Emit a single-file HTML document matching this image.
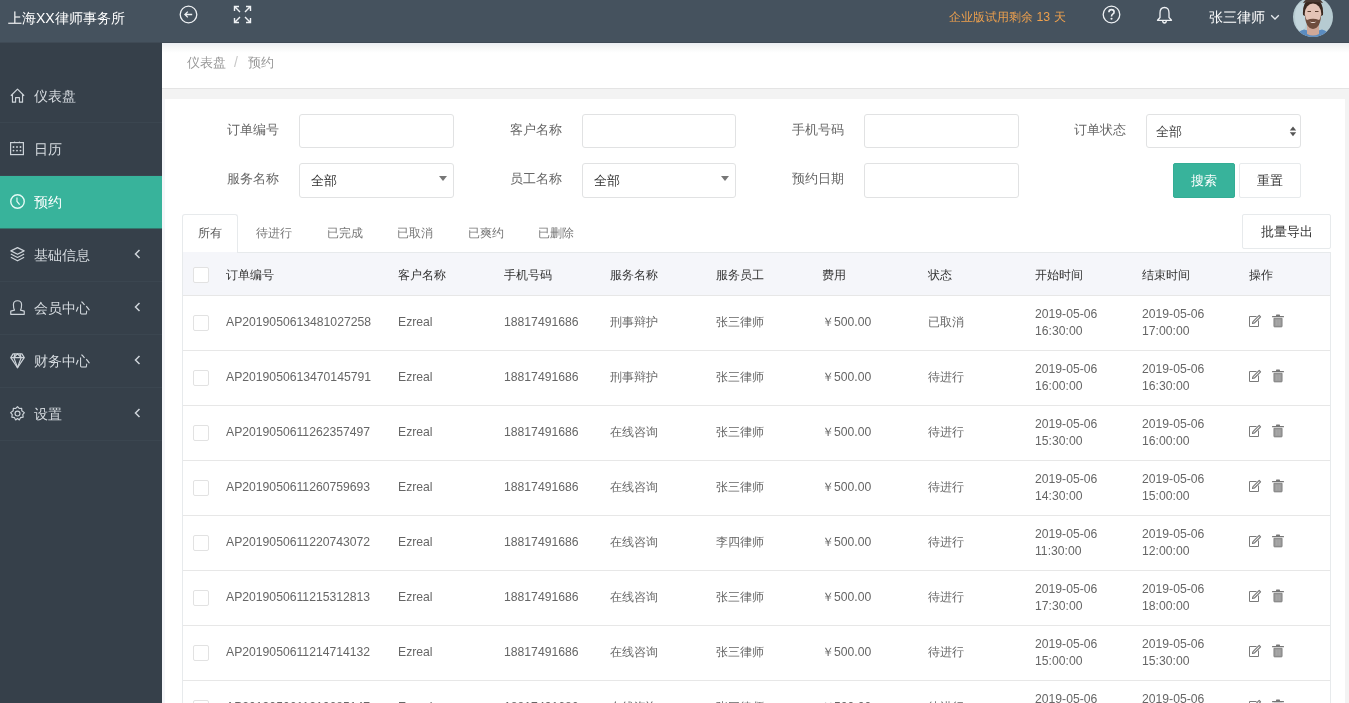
<!DOCTYPE html>
<html><head><meta charset="utf-8">
<style>
*{margin:0;padding:0;box-sizing:border-box}
html,body{width:1349px;height:703px;overflow:hidden;background:#f3f3f3;font-family:"Liberation Sans",sans-serif;font-size:13px;color:#676a6c}
.abs{position:absolute;white-space:nowrap}
svg{position:absolute;overflow:visible}
#hdr{position:absolute;left:0;top:0;width:1349px;height:43px;background:#45525e;border-bottom:1px solid #3f4a55}
#side{position:absolute;left:0;top:43px;width:162px;height:660px;background:#36404a}
.mi{position:absolute;left:0;width:162px;height:53px;border-bottom:1px solid #3b4650;color:#d5dadf;font-size:14px}
.mi.act{background:#38b39b;color:#fff;border-bottom:1px solid #33776d}
.mi .t{position:absolute;left:34px;top:16px;line-height:20px;white-space:nowrap}
#crumb{position:absolute;left:162px;top:43px;width:1187px;height:46px;background:#fff;border-bottom:1px solid #e4e4e4}
#panel{position:absolute;left:165px;top:99px;width:1180px;height:604px;background:#fff}
#gut{position:absolute;left:162px;top:99px;width:3px;height:604px;background:#f5f6f9}
.lbl{position:absolute;font-size:13px;color:#666;line-height:16px;white-space:nowrap}
.inp{position:absolute;width:155px;height:34px;border:1px solid #e1e2e3;border-radius:3px;background:#fff}
.inp .v{position:absolute;left:11px;top:8px;color:#333;font-size:13px;line-height:16px}
.tri{position:absolute;right:6px;top:12px;width:0;height:0;border-left:4px solid transparent;border-right:4px solid transparent;border-top:5px solid #777}
.btn{position:absolute;height:35px;border-radius:2px;font-size:13px;text-align:center;line-height:33px;white-space:nowrap}
.tab{position:absolute;top:225px;font-size:12px;color:#777;line-height:16px;white-space:nowrap}
#tbl{position:absolute;left:182px;top:252px;width:1149px;height:470px;border:1px solid #e7eaec;background:#fff}
#thd{position:absolute;left:183px;top:253px;width:1147px;height:43px;background:#f5f6fa}
.th{position:absolute;top:267px;font-size:12px;color:#333;font-weight:500;line-height:16px;white-space:nowrap}
.rl{position:absolute;left:183px;width:1147px;height:1px;background:#e7e7e7}
.c{position:absolute;font-size:12.2px;color:#666;line-height:16px;white-space:nowrap}
.c2{position:absolute;font-size:12.2px;color:#666;line-height:17px;white-space:nowrap}
.cb{position:absolute;width:16px;height:16px;border:1px solid #e2e2e2;border-radius:2px;background:#fff}
</style></head><body style="will-change:transform">
<div id="hdr">
  <div class="abs" style="left:8px;top:9px;font-size:14px;color:#fff;line-height:18px">上海XX律师事务所</div>
  <!-- back circle -->
  <svg style="left:179px;top:5px" width="19" height="19" viewBox="0 0 19 19"><circle cx="9.5" cy="9.5" r="8.3" fill="none" stroke="#eef1f4" stroke-width="1.3"/><path d="M13.2 9.5H6M8.8 6.6L5.9 9.5L8.8 12.4" fill="none" stroke="#eef1f4" stroke-width="1.3"/></svg>
  <!-- expand -->
  <svg style="left:233px;top:5px" width="19" height="19" viewBox="0 0 19 19"><g fill="none" stroke="#eef1f4" stroke-width="1.4"><path d="M1.5 6V1.5H6M1.8 1.8L7 7"/><path d="M13 1.5H17.5V6M17.2 1.8L12 7"/><path d="M1.5 13V17.5H6M1.8 17.2L7 12"/><path d="M13 17.5H17.5V13M17.2 17.2L12 12"/></g></svg>
  <div class="abs" style="left:949px;top:9px;font-size:12.3px;color:#eea04d;line-height:16px">企业版试用剩余 13 天</div>
  <!-- help -->
  <svg style="left:1102px;top:5px" width="19" height="19" viewBox="0 0 19 19"><circle cx="9.5" cy="9.5" r="8.3" fill="none" stroke="#eef1f4" stroke-width="1.3"/><path d="M6.9 7.2Q6.9 4.6 9.5 4.6Q12.1 4.6 12.1 7Q12.1 8.4 10.7 9.1Q9.5 9.8 9.5 11.4" fill="none" stroke="#eef1f4" stroke-width="1.6"/><circle cx="9.5" cy="13.8" r="1.05" fill="#eef1f4"/></svg>
  <!-- bell -->
  <svg style="left:1156px;top:6px" width="17" height="19" viewBox="0 0 17 19"><path d="M8.5 1.5Q4 1.5 4 7V11.5L1.5 14.3H15.5L13 11.5V7Q13 1.5 8.5 1.5Z" fill="none" stroke="#eef1f4" stroke-width="1.3" stroke-linejoin="round"/><path d="M6.6 14.6Q6.8 17 8.5 17Q10.2 17 10.4 14.6" fill="none" stroke="#eef1f4" stroke-width="1.3"/></svg>
  <div class="abs" style="left:1209px;top:8px;font-size:14px;color:#fff;line-height:18px">张三律师</div>
  <svg style="left:1270px;top:14px" width="10" height="7" viewBox="0 0 10 7"><path d="M1.2 1.3L5 5L8.8 1.3" fill="none" stroke="#e6eaee" stroke-width="1.3"/></svg>
  <!-- avatar -->
  <svg style="left:1293px;top:-3px" width="40" height="40" viewBox="0 0 40 40">
    <defs><clipPath id="av"><circle cx="20" cy="20" r="20"/></clipPath></defs>
    <g clip-path="url(#av)">
      <rect width="40" height="40" fill="#b6cbd1"/>
      <ellipse cx="8" cy="20" rx="6" ry="14" fill="#c3d6dc"/>
      <path d="M2 42Q4 34 11 32.5L20 35L29 32.5Q36 34 38 42Z" fill="#5b8cc0"/>
      <path d="M14 28H26V37Q20 40 14 37Z" fill="#cfa898"/>
      <path d="M10 18Q9 2 20 2Q31 2 30 18L28 19Q27 9 20 9Q13 9 12 19Z" fill="#3a2920"/>
      <ellipse cx="20" cy="17" rx="8.3" ry="10.5" fill="#e4c4b6"/>
      <path d="M11.8 16Q12 31 20 32Q28 31 28.2 16Q27.5 22 26 23Q20 20.5 14 23Q12.5 22 11.8 16Z" fill="#6e4d3d"/>
      <path d="M16.5 24.5Q20 27.5 23.5 24.5Q20 25.5 16.5 24.5Z" fill="#f2e4de"/>
      <path d="M10 6Q14 0 20 0Q26 0 30 6Q26 5 20 5Q14 5 10 6Z" fill="#4a3a32"/><path d="M14.5 14.5H18M22 14.5H25.5" stroke="#5a3e30" stroke-width="1.2"/>
    </g>
  </svg>
</div>
<div id="side">
  <div class="mi" style="top:27px"><svg style="left:10px;top:18px" width="15" height="15" viewBox="0 0 14 14"><path d="M0.8 7.2L7 1L13.2 7.2M2.3 5.8V13.2H5.2V9H8.8V13.2H11.7V5.8" fill="none" stroke="#cdd3d9" stroke-width="1.1" stroke-linejoin="round"/></svg><span class="t">仪表盘</span></div>
  <div class="mi" style="top:80px"><svg style="left:10px;top:18px" width="15" height="15" viewBox="0 0 15 15"><rect x="0.6" y="1.6" width="12.8" height="12" fill="none" stroke="#cdd3d9" stroke-width="1.2"/><g fill="#cdd3d9"><circle cx="4.6" cy="1.2" r="0.8"/><circle cx="9.4" cy="1.2" r="0.8"/><circle cx="3.5" cy="6" r="0.95"/><circle cx="7" cy="6" r="0.95"/><circle cx="10.5" cy="6" r="0.95"/><circle cx="3.5" cy="9.6" r="0.95"/><circle cx="7" cy="9.6" r="0.95"/><circle cx="10.5" cy="9.6" r="0.95"/></g></svg><span class="t">日历</span></div>
  <div class="mi act" style="top:133px"><svg style="left:10px;top:18px" width="15" height="15" viewBox="0 0 14 14"><circle cx="7" cy="7" r="6.3" fill="none" stroke="#e6fbf6" stroke-width="1.3"/><path d="M6.5 3.3V7L9 10" fill="none" stroke="#e6fbf6" stroke-width="1.1"/></svg><span class="t">预约</span></div>
  <div class="mi" style="top:186px"><svg style="left:10px;top:18px" width="15" height="15" viewBox="0 0 14 14"><g fill="none" stroke="#cdd3d9" stroke-width="1.1" stroke-linejoin="round"><path d="M0.8 3.6L7 0.6L13.2 3.6L7 6.8Z"/><path d="M0.8 6.6L7 9.8L13.2 6.6"/><path d="M0.8 9.6L7 12.9L13.2 9.6"/></g></svg><span class="t">基础信息</span><svg style="left:134px;top:20px" width="7" height="10" viewBox="0 0 7 10"><path d="M5.5 1L1.5 5L5.5 9" fill="none" stroke="#cfd5db" stroke-width="1.5"/></svg></div>
  <div class="mi" style="top:239px"><svg style="left:10px;top:18px" width="15" height="15" viewBox="0 0 14 14"><path d="M4.2 9.5Q3.2 8 3.2 4.4Q3.2 0.7 7 0.7Q10.8 0.7 10.8 4.4Q10.8 8 9.8 9.5L13.3 10.4V13.4H0.7V10.4Z" fill="none" stroke="#cdd3d9" stroke-width="1.1" stroke-linejoin="round"/></svg><span class="t">会员中心</span><svg style="left:134px;top:20px" width="7" height="10" viewBox="0 0 7 10"><path d="M5.5 1L1.5 5L5.5 9" fill="none" stroke="#cfd5db" stroke-width="1.5"/></svg></div>
  <div class="mi" style="top:292px"><svg style="left:10px;top:18px" width="15" height="16" viewBox="0 0 14 15"><g fill="none" stroke="#cdd3d9" stroke-width="1.1" stroke-linejoin="round"><path d="M2.8 0.8H11.2L13.3 4.3L7 13.8L0.7 4.3Z"/><path d="M0.7 4.3H13.3M4.6 0.8L3.6 4.3L7 13.8L10.4 4.3L9.4 0.8M3.6 4.3L7 0.8L10.4 4.3"/></g></svg><span class="t">财务中心</span><svg style="left:134px;top:20px" width="7" height="10" viewBox="0 0 7 10"><path d="M5.5 1L1.5 5L5.5 9" fill="none" stroke="#cfd5db" stroke-width="1.5"/></svg></div>
  <div class="mi" style="top:345px"><svg style="left:10px;top:18px" width="15" height="15" viewBox="0 0 14 14"><g fill="none" stroke="#cdd3d9" stroke-width="1.1" stroke-linejoin="round"><path d="M7 0.6L8.6 2.3L10.9 2.2L11 4.5L13.4 6.2L11.9 8L12.3 10.4L9.9 10.8L8.7 13L7 11.7L5.3 13L4.1 10.8L1.7 10.4L2.1 8L0.6 6.2L3 4.5L3.1 2.2L5.4 2.3Z"/><circle cx="7" cy="7" r="2.3"/></g></svg><span class="t">设置</span><svg style="left:134px;top:20px" width="7" height="10" viewBox="0 0 7 10"><path d="M5.5 1L1.5 5L5.5 9" fill="none" stroke="#cfd5db" stroke-width="1.5"/></svg></div>
</div>
<div id="crumb"><div class="abs" style="left:0;top:0;width:1187px;height:10px;background:linear-gradient(#ebeef2,#f6f7f7 45%,#fff)"></div>
  <div class="abs" style="left:25px;top:11px;font-size:13px;color:#999;line-height:18px">仪表盘</div>
  <div class="abs" style="left:72px;top:10px;font-size:14px;color:#c8c8c8;line-height:18px">/</div>
  <div class="abs" style="left:86px;top:11px;font-size:13px;color:#999;line-height:18px">预约</div>
</div>
<div id="panel"></div><div id="gut"></div>

<!-- filter form -->
<div class="lbl" style="left:227px;top:122px">订单编号</div>
<div class="inp" style="left:299px;top:114px"></div>
<div class="lbl" style="left:510px;top:122px">客户名称</div>
<div class="inp" style="left:582px;top:114px;width:154px"></div>
<div class="lbl" style="left:792px;top:122px">手机号码</div>
<div class="inp" style="left:864px;top:114px"></div>
<div class="lbl" style="left:1074px;top:122px">订单状态</div>
<div class="inp" style="left:1146px;top:114px;width:155px"><span class="v" style="left:9px;top:9px;color:#444">全部</span>
  <svg style="left:142px;top:11px" width="8" height="11" viewBox="0 0 8 11"><path d="M0.8 4.6L4 0.6L7.2 4.6Z M0.8 6.2L4 10.2L7.2 6.2Z" fill="#555"/></svg></div>

<div class="lbl" style="left:227px;top:171px">服务名称</div>
<div class="inp" style="left:299px;top:163px;height:35px"><span class="v" style="top:9px">全部</span><div class="tri"></div></div>
<div class="lbl" style="left:510px;top:171px">员工名称</div>
<div class="inp" style="left:582px;top:163px;height:35px;width:154px"><span class="v" style="top:9px">全部</span><div class="tri"></div></div>
<div class="lbl" style="left:792px;top:171px">预约日期</div>
<div class="inp" style="left:864px;top:163px;height:35px"></div>
<div class="btn" style="left:1173px;top:163px;width:62px;background:#38b39b;border:1px solid #34ad95;color:#fff">搜索</div>
<div class="btn" style="left:1239px;top:163px;width:62px;background:#fff;border:1px solid #e7eaec;color:#333">重置</div>

<!-- tabs -->
<div class="abs" style="left:182px;top:214px;width:56px;height:40px;background:#fff;border:1px solid #e7eaec;border-bottom:none;border-radius:3px 3px 0 0"></div>
<div class="tab" style="left:198px;color:#555">所有</div>
<div class="tab" style="left:256px">待进行</div>
<div class="tab" style="left:327px">已完成</div>
<div class="tab" style="left:397px">已取消</div>
<div class="tab" style="left:468px">已爽约</div>
<div class="tab" style="left:538px">已删除</div>
<div class="btn" style="left:1242px;top:214px;width:89px;height:35px;background:#fff;border:1px solid #e7eaec;color:#333">批量导出</div>

<!-- table -->
<div id="tbl"></div>
<div id="thd"></div>
<div class="abs" style="left:183px;top:252px;width:54px;height:1px;background:#f5f6fa"></div>
<div class="cb" style="left:193px;top:267px"></div>
<div class="th" style="left:226px">订单编号</div>
<div class="th" style="left:398px">客户名称</div>
<div class="th" style="left:504px">手机号码</div>
<div class="th" style="left:610px">服务名称</div>
<div class="th" style="left:716px">服务员工</div>
<div class="th" style="left:822px">费用</div>
<div class="th" style="left:928px">状态</div>
<div class="th" style="left:1035px">开始时间</div>
<div class="th" style="left:1142px">结束时间</div>
<div class="th" style="left:1249px">操作</div>
<div class="rl" style="top:295px"></div>
<div class="cb" style="left:193px;top:315px"></div>
<div class="c" style="left:226px;top:314px">AP2019050613481027258</div>
<div class="c" style="left:398px;top:314px">Ezreal</div>
<div class="c" style="left:504px;top:314px">18817491686</div>
<div class="c" style="left:610px;top:314px">刑事辩护</div>
<div class="c" style="left:716px;top:314px">张三律师</div>
<div class="c" style="left:822px;top:314px">￥500.00</div>
<div class="c" style="left:928px;top:314px">已取消</div>
<div class="c2" style="left:1035px;top:306px">2019-05-06<br>16:30:00</div>
<div class="c2" style="left:1142px;top:306px">2019-05-06<br>17:00:00</div>
<svg class="ic" style="left:1248px;top:314px" width="14" height="14" viewBox="0 0 14 14"><path d="M8.5 2.5H1.5V12.5H10.5V6.5" fill="none" stroke="#7a7a7a" stroke-width="1"/><path d="M4.5 9.5L5 7.6L11.2 1.4L12.6 2.8L6.4 9Z" fill="none" stroke="#777" stroke-width="1.1" stroke-linejoin="round"/></svg>
<svg class="ic" style="left:1271px;top:314px" width="14" height="14" viewBox="0 0 14 14"><rect x="5" y="0.6" width="4" height="1.4" rx="0.6" fill="#777"/><rect x="1" y="2" width="12" height="1.3" rx="0.5" fill="#777"/><path d="M2.9 4.3H11.1V12.3Q11.1 12.9 10.4 12.9H3.6Q2.9 12.9 2.9 12.3Z" fill="#9a9a9a" stroke="#7c7c7c" stroke-width="0.8"/><path d="M5.2 5.6V11.6M7 5.6V11.6M8.8 5.6V11.6" stroke="#b4b4b4" stroke-width="0.7"/></svg>
<div class="rl" style="top:350px"></div>
<div class="cb" style="left:193px;top:370px"></div>
<div class="c" style="left:226px;top:369px">AP2019050613470145791</div>
<div class="c" style="left:398px;top:369px">Ezreal</div>
<div class="c" style="left:504px;top:369px">18817491686</div>
<div class="c" style="left:610px;top:369px">刑事辩护</div>
<div class="c" style="left:716px;top:369px">张三律师</div>
<div class="c" style="left:822px;top:369px">￥500.00</div>
<div class="c" style="left:928px;top:369px">待进行</div>
<div class="c2" style="left:1035px;top:361px">2019-05-06<br>16:00:00</div>
<div class="c2" style="left:1142px;top:361px">2019-05-06<br>16:30:00</div>
<svg class="ic" style="left:1248px;top:369px" width="14" height="14" viewBox="0 0 14 14"><path d="M8.5 2.5H1.5V12.5H10.5V6.5" fill="none" stroke="#7a7a7a" stroke-width="1"/><path d="M4.5 9.5L5 7.6L11.2 1.4L12.6 2.8L6.4 9Z" fill="none" stroke="#777" stroke-width="1.1" stroke-linejoin="round"/></svg>
<svg class="ic" style="left:1271px;top:369px" width="14" height="14" viewBox="0 0 14 14"><rect x="5" y="0.6" width="4" height="1.4" rx="0.6" fill="#777"/><rect x="1" y="2" width="12" height="1.3" rx="0.5" fill="#777"/><path d="M2.9 4.3H11.1V12.3Q11.1 12.9 10.4 12.9H3.6Q2.9 12.9 2.9 12.3Z" fill="#9a9a9a" stroke="#7c7c7c" stroke-width="0.8"/><path d="M5.2 5.6V11.6M7 5.6V11.6M8.8 5.6V11.6" stroke="#b4b4b4" stroke-width="0.7"/></svg>
<div class="rl" style="top:405px"></div>
<div class="cb" style="left:193px;top:425px"></div>
<div class="c" style="left:226px;top:424px">AP2019050611262357497</div>
<div class="c" style="left:398px;top:424px">Ezreal</div>
<div class="c" style="left:504px;top:424px">18817491686</div>
<div class="c" style="left:610px;top:424px">在线咨询</div>
<div class="c" style="left:716px;top:424px">张三律师</div>
<div class="c" style="left:822px;top:424px">￥500.00</div>
<div class="c" style="left:928px;top:424px">待进行</div>
<div class="c2" style="left:1035px;top:416px">2019-05-06<br>15:30:00</div>
<div class="c2" style="left:1142px;top:416px">2019-05-06<br>16:00:00</div>
<svg class="ic" style="left:1248px;top:424px" width="14" height="14" viewBox="0 0 14 14"><path d="M8.5 2.5H1.5V12.5H10.5V6.5" fill="none" stroke="#7a7a7a" stroke-width="1"/><path d="M4.5 9.5L5 7.6L11.2 1.4L12.6 2.8L6.4 9Z" fill="none" stroke="#777" stroke-width="1.1" stroke-linejoin="round"/></svg>
<svg class="ic" style="left:1271px;top:424px" width="14" height="14" viewBox="0 0 14 14"><rect x="5" y="0.6" width="4" height="1.4" rx="0.6" fill="#777"/><rect x="1" y="2" width="12" height="1.3" rx="0.5" fill="#777"/><path d="M2.9 4.3H11.1V12.3Q11.1 12.9 10.4 12.9H3.6Q2.9 12.9 2.9 12.3Z" fill="#9a9a9a" stroke="#7c7c7c" stroke-width="0.8"/><path d="M5.2 5.6V11.6M7 5.6V11.6M8.8 5.6V11.6" stroke="#b4b4b4" stroke-width="0.7"/></svg>
<div class="rl" style="top:460px"></div>
<div class="cb" style="left:193px;top:480px"></div>
<div class="c" style="left:226px;top:479px">AP2019050611260759693</div>
<div class="c" style="left:398px;top:479px">Ezreal</div>
<div class="c" style="left:504px;top:479px">18817491686</div>
<div class="c" style="left:610px;top:479px">在线咨询</div>
<div class="c" style="left:716px;top:479px">张三律师</div>
<div class="c" style="left:822px;top:479px">￥500.00</div>
<div class="c" style="left:928px;top:479px">待进行</div>
<div class="c2" style="left:1035px;top:471px">2019-05-06<br>14:30:00</div>
<div class="c2" style="left:1142px;top:471px">2019-05-06<br>15:00:00</div>
<svg class="ic" style="left:1248px;top:479px" width="14" height="14" viewBox="0 0 14 14"><path d="M8.5 2.5H1.5V12.5H10.5V6.5" fill="none" stroke="#7a7a7a" stroke-width="1"/><path d="M4.5 9.5L5 7.6L11.2 1.4L12.6 2.8L6.4 9Z" fill="none" stroke="#777" stroke-width="1.1" stroke-linejoin="round"/></svg>
<svg class="ic" style="left:1271px;top:479px" width="14" height="14" viewBox="0 0 14 14"><rect x="5" y="0.6" width="4" height="1.4" rx="0.6" fill="#777"/><rect x="1" y="2" width="12" height="1.3" rx="0.5" fill="#777"/><path d="M2.9 4.3H11.1V12.3Q11.1 12.9 10.4 12.9H3.6Q2.9 12.9 2.9 12.3Z" fill="#9a9a9a" stroke="#7c7c7c" stroke-width="0.8"/><path d="M5.2 5.6V11.6M7 5.6V11.6M8.8 5.6V11.6" stroke="#b4b4b4" stroke-width="0.7"/></svg>
<div class="rl" style="top:515px"></div>
<div class="cb" style="left:193px;top:535px"></div>
<div class="c" style="left:226px;top:534px">AP2019050611220743072</div>
<div class="c" style="left:398px;top:534px">Ezreal</div>
<div class="c" style="left:504px;top:534px">18817491686</div>
<div class="c" style="left:610px;top:534px">在线咨询</div>
<div class="c" style="left:716px;top:534px">李四律师</div>
<div class="c" style="left:822px;top:534px">￥500.00</div>
<div class="c" style="left:928px;top:534px">待进行</div>
<div class="c2" style="left:1035px;top:526px">2019-05-06<br>11:30:00</div>
<div class="c2" style="left:1142px;top:526px">2019-05-06<br>12:00:00</div>
<svg class="ic" style="left:1248px;top:534px" width="14" height="14" viewBox="0 0 14 14"><path d="M8.5 2.5H1.5V12.5H10.5V6.5" fill="none" stroke="#7a7a7a" stroke-width="1"/><path d="M4.5 9.5L5 7.6L11.2 1.4L12.6 2.8L6.4 9Z" fill="none" stroke="#777" stroke-width="1.1" stroke-linejoin="round"/></svg>
<svg class="ic" style="left:1271px;top:534px" width="14" height="14" viewBox="0 0 14 14"><rect x="5" y="0.6" width="4" height="1.4" rx="0.6" fill="#777"/><rect x="1" y="2" width="12" height="1.3" rx="0.5" fill="#777"/><path d="M2.9 4.3H11.1V12.3Q11.1 12.9 10.4 12.9H3.6Q2.9 12.9 2.9 12.3Z" fill="#9a9a9a" stroke="#7c7c7c" stroke-width="0.8"/><path d="M5.2 5.6V11.6M7 5.6V11.6M8.8 5.6V11.6" stroke="#b4b4b4" stroke-width="0.7"/></svg>
<div class="rl" style="top:570px"></div>
<div class="cb" style="left:193px;top:590px"></div>
<div class="c" style="left:226px;top:589px">AP2019050611215312813</div>
<div class="c" style="left:398px;top:589px">Ezreal</div>
<div class="c" style="left:504px;top:589px">18817491686</div>
<div class="c" style="left:610px;top:589px">在线咨询</div>
<div class="c" style="left:716px;top:589px">张三律师</div>
<div class="c" style="left:822px;top:589px">￥500.00</div>
<div class="c" style="left:928px;top:589px">待进行</div>
<div class="c2" style="left:1035px;top:581px">2019-05-06<br>17:30:00</div>
<div class="c2" style="left:1142px;top:581px">2019-05-06<br>18:00:00</div>
<svg class="ic" style="left:1248px;top:589px" width="14" height="14" viewBox="0 0 14 14"><path d="M8.5 2.5H1.5V12.5H10.5V6.5" fill="none" stroke="#7a7a7a" stroke-width="1"/><path d="M4.5 9.5L5 7.6L11.2 1.4L12.6 2.8L6.4 9Z" fill="none" stroke="#777" stroke-width="1.1" stroke-linejoin="round"/></svg>
<svg class="ic" style="left:1271px;top:589px" width="14" height="14" viewBox="0 0 14 14"><rect x="5" y="0.6" width="4" height="1.4" rx="0.6" fill="#777"/><rect x="1" y="2" width="12" height="1.3" rx="0.5" fill="#777"/><path d="M2.9 4.3H11.1V12.3Q11.1 12.9 10.4 12.9H3.6Q2.9 12.9 2.9 12.3Z" fill="#9a9a9a" stroke="#7c7c7c" stroke-width="0.8"/><path d="M5.2 5.6V11.6M7 5.6V11.6M8.8 5.6V11.6" stroke="#b4b4b4" stroke-width="0.7"/></svg>
<div class="rl" style="top:625px"></div>
<div class="cb" style="left:193px;top:645px"></div>
<div class="c" style="left:226px;top:644px">AP2019050611214714132</div>
<div class="c" style="left:398px;top:644px">Ezreal</div>
<div class="c" style="left:504px;top:644px">18817491686</div>
<div class="c" style="left:610px;top:644px">在线咨询</div>
<div class="c" style="left:716px;top:644px">张三律师</div>
<div class="c" style="left:822px;top:644px">￥500.00</div>
<div class="c" style="left:928px;top:644px">待进行</div>
<div class="c2" style="left:1035px;top:636px">2019-05-06<br>15:00:00</div>
<div class="c2" style="left:1142px;top:636px">2019-05-06<br>15:30:00</div>
<svg class="ic" style="left:1248px;top:644px" width="14" height="14" viewBox="0 0 14 14"><path d="M8.5 2.5H1.5V12.5H10.5V6.5" fill="none" stroke="#7a7a7a" stroke-width="1"/><path d="M4.5 9.5L5 7.6L11.2 1.4L12.6 2.8L6.4 9Z" fill="none" stroke="#777" stroke-width="1.1" stroke-linejoin="round"/></svg>
<svg class="ic" style="left:1271px;top:644px" width="14" height="14" viewBox="0 0 14 14"><rect x="5" y="0.6" width="4" height="1.4" rx="0.6" fill="#777"/><rect x="1" y="2" width="12" height="1.3" rx="0.5" fill="#777"/><path d="M2.9 4.3H11.1V12.3Q11.1 12.9 10.4 12.9H3.6Q2.9 12.9 2.9 12.3Z" fill="#9a9a9a" stroke="#7c7c7c" stroke-width="0.8"/><path d="M5.2 5.6V11.6M7 5.6V11.6M8.8 5.6V11.6" stroke="#b4b4b4" stroke-width="0.7"/></svg>
<div class="rl" style="top:680px"></div>
<div class="cb" style="left:193px;top:700px"></div>
<div class="c" style="left:226px;top:699px">AP2019050611210685147</div>
<div class="c" style="left:398px;top:699px">Ezreal</div>
<div class="c" style="left:504px;top:699px">18817491686</div>
<div class="c" style="left:610px;top:699px">在线咨询</div>
<div class="c" style="left:716px;top:699px">张三律师</div>
<div class="c" style="left:822px;top:699px">￥500.00</div>
<div class="c" style="left:928px;top:699px">待进行</div>
<div class="c2" style="left:1035px;top:691px">2019-05-06<br>14:00:00</div>
<div class="c2" style="left:1142px;top:691px">2019-05-06<br>14:30:00</div>
<svg class="ic" style="left:1248px;top:699px" width="14" height="14" viewBox="0 0 14 14"><path d="M8.5 2.5H1.5V12.5H10.5V6.5" fill="none" stroke="#7a7a7a" stroke-width="1"/><path d="M4.5 9.5L5 7.6L11.2 1.4L12.6 2.8L6.4 9Z" fill="none" stroke="#777" stroke-width="1.1" stroke-linejoin="round"/></svg>
<svg class="ic" style="left:1271px;top:699px" width="14" height="14" viewBox="0 0 14 14"><rect x="5" y="0.6" width="4" height="1.4" rx="0.6" fill="#777"/><rect x="1" y="2" width="12" height="1.3" rx="0.5" fill="#777"/><path d="M2.9 4.3H11.1V12.3Q11.1 12.9 10.4 12.9H3.6Q2.9 12.9 2.9 12.3Z" fill="#9a9a9a" stroke="#7c7c7c" stroke-width="0.8"/><path d="M5.2 5.6V11.6M7 5.6V11.6M8.8 5.6V11.6" stroke="#b4b4b4" stroke-width="0.7"/></svg>
</body></html>
